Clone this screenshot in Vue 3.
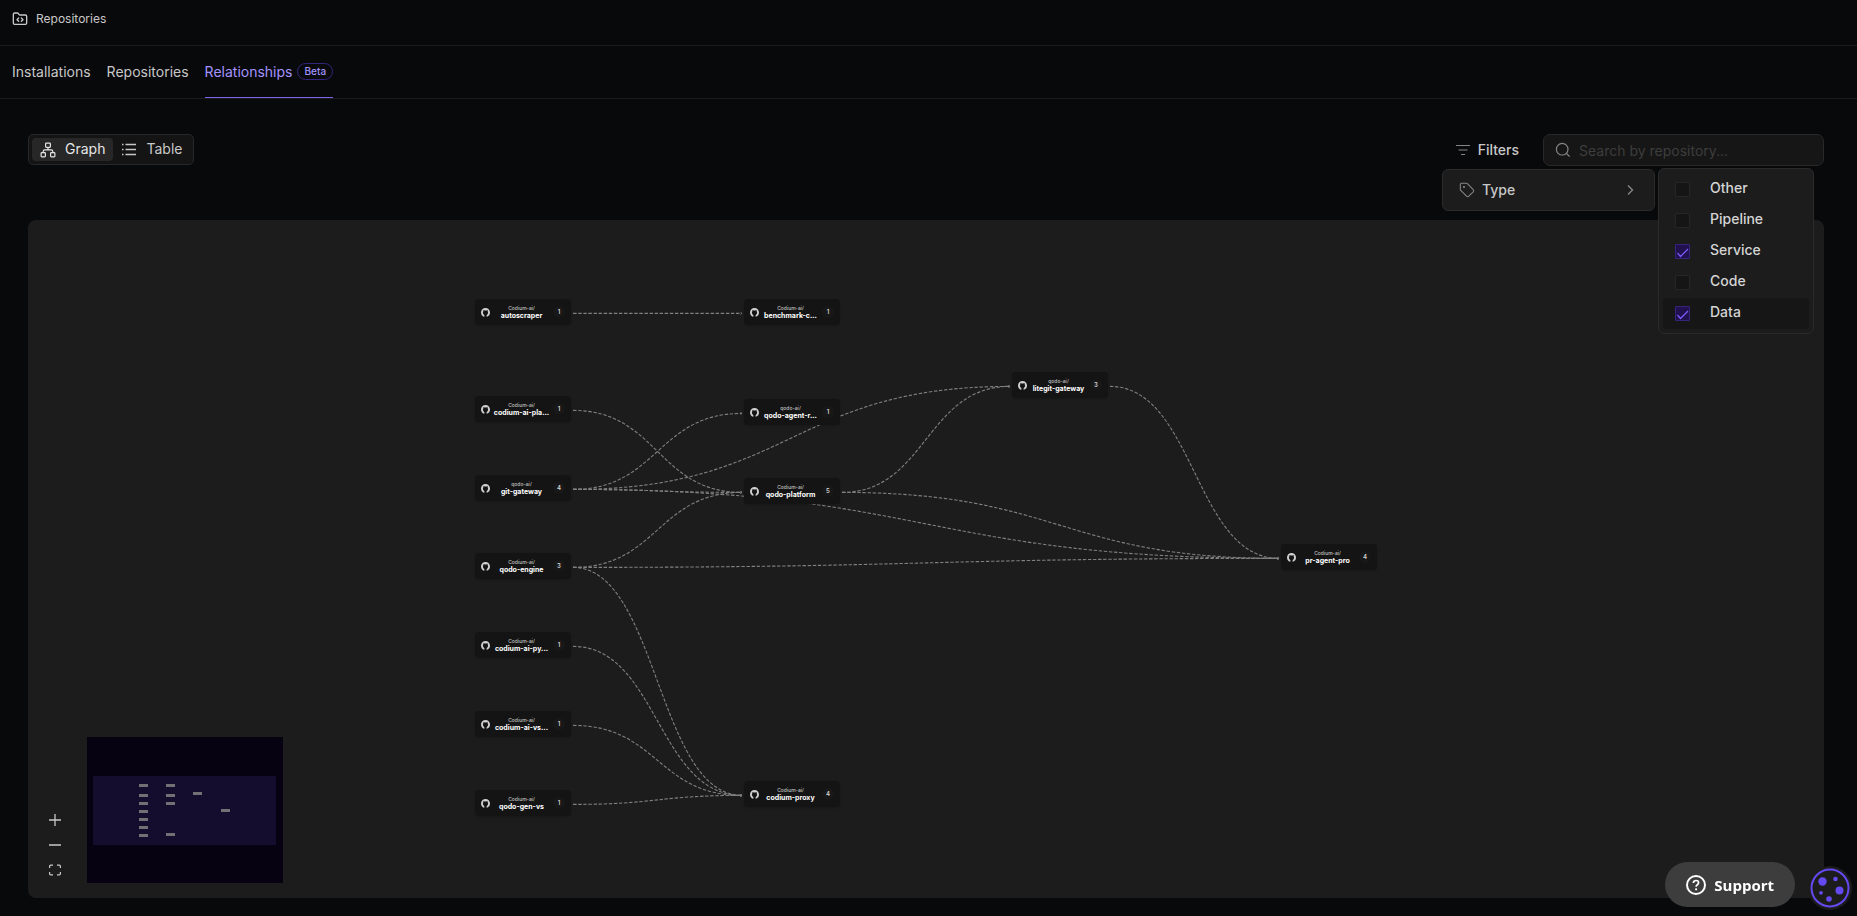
<template>
  <div class="page">
    <header class="topbar">
      <svg class="topbar-icon" viewBox="0 0 24 24" fill="none" stroke="currentColor" stroke-width="2" stroke-linecap="round" stroke-linejoin="round">
        <path d="M20 20a2 2 0 0 0 2-2V8a2 2 0 0 0-2-2h-7.9a2 2 0 0 1-1.69-.9L9.6 3.9A2 2 0 0 0 7.93 3H4a2 2 0 0 0-2 2v13a2 2 0 0 0 2 2Z" />
        <path d="m10 10.5-2.5 2.5 2.5 2.5M14 10.5l2.5 2.5-2.5 2.5" />
      </svg>
      <span>Repositories</span>
    </header>

    <nav class="tabs">
      <a
        v-for="tab in tabs"
        :key="tab.name"
        href="#"
        class="tab"
        :class="{ active: activeTab === tab.name }"
        @click.prevent="activeTab = tab.name"
      >
        {{ tab.name }}
        <span v-if="tab.badge" class="beta">{{ tab.badge }}</span>
      </a>
    </nav>

    <main class="content">
      <div class="toolbar">
        <div class="view-switch">
          <button type="button" :class="{ active: view === 'graph' }" @click="view = 'graph'">
            <svg viewBox="0 0 16 16" fill="none" stroke="currentColor" stroke-width="1.2">
              <rect x="5.6" y="1.1" width="4.8" height="4.3" rx="0.8" />
              <rect x="1.1" y="10.6" width="4.3" height="4.3" rx="0.8" />
              <rect x="10.6" y="10.6" width="4.3" height="4.3" rx="0.8" />
              <path d="M8 5.4v2.4M3.2 10.6V9.4c0-.9.6-1.6 1.6-1.6h6.4c1 0 1.6.7 1.6 1.6v1.2" />
            </svg>
            <span>Graph</span>
          </button>
          <button type="button" :class="{ active: view === 'table' }" @click="view = 'table'">
            <svg viewBox="0 0 16 16" fill="none" stroke="currentColor" stroke-width="1.3">
              <path d="M4.5 2.500H15M4.5 7.500H15M4.5 12.500H15M1 2.500h1.5M1 7.500h1.5M1 12.500h1.5" />
            </svg>
            <span>Table</span>
          </button>
        </div>

        <div class="actions">
          <div class="filter-wrap">
            <button type="button" class="filter-button" @click="filtersOpen = !filtersOpen">
              <svg viewBox="0 0 16 16" fill="none" stroke="currentColor" stroke-width="1.2">
                <path d="M1 3.5h14M3.5 8h9M6 12.5h4" />
              </svg>
              <span>Filters</span>
            </button>

            <div v-if="filtersOpen" class="menu">
              <button type="button" class="menu-item" @click="typeOpen = !typeOpen">
                <svg viewBox="0 0 24 24" fill="none" stroke="currentColor" stroke-width="1.6" stroke-linejoin="round">
                  <path d="M12.6 2.6A2 2 0 0 0 11.2 2H4a2 2 0 0 0-2 2v7.2a2 2 0 0 0 .6 1.4l8.7 8.7a2.4 2.4 0 0 0 3.4 0l6.6-6.6a2.4 2.4 0 0 0 0-3.4z" />
                  <circle cx="7.5" cy="7.5" r="0.8" fill="currentColor" />
                </svg>
                <span>Type</span>
                <svg class="chevron" viewBox="0 0 16 16" fill="none" stroke="currentColor" stroke-width="1.4">
                  <path d="m6 3.5 4.5 4.5L6 12.5" />
                </svg>
              </button>

              <div v-if="typeOpen" class="submenu">
                <label
                  v-for="option in typeOptions"
                  :key="option"
                  class="option"
                  :class="{ highlighted: option === hovered }"
                  @mouseenter="hovered = option"
                >
                  <input v-model="selectedTypes" type="checkbox" :value="option" />
                  <span>{{ option }}</span>
                </label>
              </div>
            </div>
          </div>

          <label class="search">
            <svg viewBox="0 0 16 16" fill="none" stroke="currentColor" stroke-width="1.2">
              <circle cx="7.2" cy="7.2" r="5.8" />
              <path d="m11.5 11.5 3.2 3.2" />
            </svg>
            <input v-model="query" type="text" placeholder="Search by repository..." aria-label="Search by repository" />
          </label>
        </div>
      </div>

      <section class="graph">
        <svg class="edges">
          <defs>
            <marker id="arrow" viewBox="0 0 4 4" refX="3" refY="2" markerWidth="3" markerHeight="3" orient="auto">
              <path d="M1 0.5 3 2 1 3.5" fill="none" stroke="#7a7a7a" stroke-width="0.8" />
            </marker>
          </defs>
          <path v-for="edge in edgePaths" :key="edge.key" :d="edge.d" class="edge" marker-end="url(#arrow)" />
        </svg>

        <div
          v-for="node in nodes"
          :key="node.id"
          class="node"
          :style="{ left: node.x + 'px', top: node.y + 'px' }"
        >
          <svg class="github" viewBox="0 0 16 16" fill="currentColor">
            <path d="M8 0C3.58 0 0 3.58 0 8c0 3.54 2.29 6.53 5.47 7.59.4.07.55-.17.55-.38v-2.4C5.2 12.1 3.4 10.7 3.4 8c0-1 .3-1.8.9-2.4-.1-.5-.2-1.3.1-2.1.8 0 1.6.4 2.2.9.9-.2 1.900-.2 2.800 0 .6-.5 1.400-.9 2.200-.9.3.8.2 1.600.1 2.100.6.6.9 1.400.9 2.400 0 2.700-1.800 4.100-2.620 4.810v2.400c0 .21.15.46.55.38A8.010 8.010 0 0 0 16 8c0-4.420-3.580-8-8-8z" />
          </svg>
          <div class="node-text">
            <span class="org">{{ node.org }}</span>
            <span class="name">{{ node.name }}</span>
          </div>
          <span class="count">{{ node.count }}</span>
        </div>

        <div class="overlay">
          <div class="controls">
            <button type="button" aria-label="Zoom in">
              <svg viewBox="0 0 12 12" stroke="currentColor" stroke-width="1.3"><path d="M0 6h12M6 0v12" /></svg>
            </button>
            <button type="button" aria-label="Zoom out">
              <svg viewBox="0 0 12 12" stroke="currentColor" stroke-width="1.3"><path d="M0 6h12" /></svg>
            </button>
            <button type="button" aria-label="Fit view">
              <svg viewBox="0 0 12 12" fill="none" stroke="currentColor" stroke-width="1.2">
                <path d="M.6 4V2.200Q.6 1.100 1.700 1.100H4M8 1.100h2.300q1.100 0 1.100 1.100V4M11.400 8v1.800q0 1.100-1.100 1.100H8M4 10.900H1.700Q.6 10.900.6 9.800V8" />
              </svg>
            </button>
          </div>
          <svg class="minimap" viewBox="0 0 196 146">
            <rect x="6" y="39" width="183" height="69" fill="#150d2e" />
            <rect
              v-for="node in nodes"
              :key="node.id"
              :x="minimapX(node)"
              :y="minimapY(node)"
              width="9"
              height="3"
              fill="#737075"
            />
          </svg>
        </div>
      </section>
    </main>

    <div class="floating">
      <button type="button" class="support">
        <svg viewBox="0 0 20 20" fill="none" stroke="currentColor" stroke-width="2">
          <circle cx="10" cy="10" r="9" />
          <path d="M7.400 8c0-1.500 1.100-2.500 2.600-2.500s2.600.9 2.600 2.300c0 1.900-2.500 2-2.500 4" stroke-width="1.700" />
          <circle cx="10.100" cy="14.300" r="1.100" fill="currentColor" stroke="none" />
        </svg>
        Support
      </button>
      <button type="button" class="cookie" aria-label="Cookie settings">
        <svg viewBox="0 0 44 44">
          <circle cx="22" cy="22" r="18.500" fill="none" stroke="#6549f0" stroke-width="2" />
          <g fill="#6549f0">
            <circle cx="14.500" cy="15.500" r="4.200" />
            <circle cx="27.500" cy="13" r="2.300" />
            <circle cx="31.500" cy="24.500" r="4" />
            <circle cx="13" cy="26.800" r="1.900" />
            <circle cx="21" cy="33" r="2.800" />
          </g>
        </svg>
      </button>
    </div>
  </div>
</template>

<script setup>
import { ref, computed } from 'vue'

const tabs = [
  { name: 'Installations' },
  { name: 'Repositories' },
  { name: 'Relationships', badge: 'Beta' }
]
const activeTab = ref('Relationships')
const view = ref('graph')
const query = ref('')

// --- Filters ---
const filtersOpen = ref(true)
const typeOpen = ref(true)
const typeOptions = ['Other', 'Pipeline', 'Service', 'Code', 'Data']
const selectedTypes = ref(['Service', 'Data'])
const hovered = ref('Data')

// --- Graph ---
const NODE_WIDTH = 96

const nodes = [
  { id: 'scraper', org: 'Codium-ai/', name: 'autoscraper', count: 1, x: 447, y: 79 },
  { id: 'pla', org: 'Codium-ai/', name: 'codium-ai-pla...', count: 1, x: 447, y: 176 },
  { id: 'git', org: 'qodo-ai/', name: 'git-gateway', count: 4, x: 447, y: 255 },
  { id: 'engine', org: 'Codium-ai/', name: 'qodo-engine', count: 3, x: 447, y: 333 },
  { id: 'py', org: 'Codium-ai/', name: 'codium-ai-py...', count: 1, x: 447, y: 412 },
  { id: 'vs', org: 'Codium-ai/', name: 'codium-ai-vs...', count: 1, x: 447, y: 491 },
  { id: 'gen', org: 'Codium-ai/', name: 'qodo-gen-vs', count: 1, x: 447, y: 570 },
  { id: 'bench', org: 'Codium-ai/', name: 'benchmark-c...', count: 1, x: 716, y: 79 },
  { id: 'agent', org: 'qodo-ai/', name: 'qodo-agent-r...', count: 1, x: 716, y: 179 },
  { id: 'platform', org: 'Codium-ai/', name: 'qodo-platform', count: 5, x: 716, y: 258 },
  { id: 'proxy', org: 'Codium-ai/', name: 'codium-proxy', count: 4, x: 716, y: 561 },
  { id: 'litegit', org: 'qodo-ai/', name: 'litegit-gateway', count: 3, x: 984, y: 152 },
  { id: 'pro', org: 'Codium-ai/', name: 'pr-agent-pro', count: 4, x: 1253, y: 324 }
]

const edges = [
  ['scraper', 'bench'],
  ['pla', 'platform'],
  ['git', 'agent'],
  ['git', 'litegit'],
  ['git', 'platform'],
  ['git', 'pro'],
  ['engine', 'platform'],
  ['engine', 'pro'],
  ['engine', 'proxy'],
  ['py', 'proxy'],
  ['vs', 'proxy'],
  ['gen', 'proxy'],
  ['platform', 'litegit'],
  ['platform', 'pro'],
  ['litegit', 'pro']
]

const edgePaths = computed(() =>
  edges.map(([from, to]) => {
    const source = nodes.find((n) => n.id === from)
    const target = nodes.find((n) => n.id === to)
    const sx = source.x + NODE_WIDTH + 2
    const sy = source.y + 14.4
    const tx = target.x - 2
    const ty = target.y + 14.4
    const mid = (sx + tx) / 2
    return { key: `${from}-${to}`, d: `M${sx} ${sy}C${mid} ${sy} ${mid} ${ty} ${tx} ${ty}` }
  })
)

// Node position inside the minimap
const minimapX = (node) => Math.round(6 + node.x * 0.102)
const minimapY = (node) => Math.round(39 + node.y * 0.102)
</script>

<style>
body {
  background: #08090b;
}
</style>

<style scoped>
.page {
  min-height: 100vh;
  box-sizing: border-box;
  display: flex;
  flex-direction: column;
  background: #08090b;
  color: #c8c8c8;
  font-family: Inter, "Liberation Sans", sans-serif;
  font-size: 14px;
}

button {
  font: inherit;
  color: inherit;
  background: none;
  border: none;
  padding: 0;
  cursor: pointer;
}

/* === Header === */
.topbar {
  display: flex;
  align-items: center;
  gap: 8px;
  height: 45px;
  padding: 0 12px 7px;
  box-sizing: border-box;
  font-size: 12px;
}
.topbar-icon {
  width: 16px;
  height: 16px;
}
.topbar span {
  padding-bottom: 1px;
}

.tabs {
  display: flex;
  gap: 16px;
  height: 54px;
  padding: 0 12px;
  box-sizing: border-box;
  border-top: 1px solid #1c1c1d;
  border-bottom: 1px solid #1c1c1d;
}
.tab {
  display: flex;
  align-items: center;
  gap: 5px;
  padding-bottom: 1px;
  border-bottom: 1px solid transparent;
  color: inherit;
  text-decoration: none;
}
.tab.active {
  color: #a394ff;
  border-bottom-color: #7b61ea;
}
.beta {
  padding: 0 6px;
  border: 1px solid #35247c;
  border-radius: 9px;
  font-size: 10px;
  font-weight: 500;
  line-height: 15px;
}

/* === Toolbar === */
.content {
  flex: 1;
  display: flex;
  flex-direction: column;
  padding: 35px 33px 18px 28px;
}
.toolbar {
  display: flex;
  justify-content: space-between;
  align-items: flex-start;
  height: 86px;
}
.view-switch {
  display: flex;
  padding: 3px;
  background: #141414;
  border: 1px solid #282828;
  border-radius: 5px;
}
.view-switch button {
  display: flex;
  align-items: center;
  gap: 9px;
  height: 23px;
  padding: 0 8px;
  border-radius: 4px;
}
.view-switch button.active {
  background: #272727;
  color: #e6e6e6;
}
.view-switch svg {
  width: 16px;
  height: 16px;
}
.view-switch span,
.filter-button span,
.menu-item span {
  padding-bottom: 2px;
}

.actions {
  display: flex;
  gap: 24px;
}
.filter-wrap {
  position: relative;
}
.filter-button {
  display: flex;
  align-items: center;
  gap: 7px;
  height: 32px;
  font-weight: 500;
}
.filter-button svg,
.menu-item svg {
  width: 16px;
  height: 16px;
  color: #858585;
}

.search {
  display: flex;
  align-items: center;
  gap: 8px;
  width: 281px;
  height: 32px;
  padding: 0 11px;
  box-sizing: border-box;
  background: #161616;
  border: 1px solid #292929;
  border-radius: 7px;
}
.search svg {
  flex: none;
  width: 16px;
  height: 16px;
  color: #858585;
}
.search input {
  flex: 1;
  min-width: 0;
  padding: 0;
  background: none;
  border: none;
  outline: none;
  color: #d0d0d0;
  font: inherit;
}
.search input::placeholder {
  color: #3d3d3d;
}

/* === Dropdown menus === */
.menu {
  position: absolute;
  top: 35px;
  right: -136px;
  z-index: 10;
  width: 213px;
  box-sizing: border-box;
  background: #1c1c1c;
  border: 1px solid #2a2a2a;
  border-radius: 6px;
}
.menu-item {
  display: flex;
  align-items: center;
  gap: 7px;
  width: 100%;
  height: 40px;
  padding: 0 16px;
  font-weight: 500;
}
.menu-item .chevron {
  margin-left: auto;
}
.submenu {
  position: absolute;
  top: -2px;
  left: 215px;
  width: 156px;
  padding: 5px 4px 4px;
  box-sizing: border-box;
  background: #1c1c1c;
  border: 1px solid #2a2a2a;
  border-radius: 6px;
}
.option {
  display: flex;
  align-items: center;
  gap: 20px;
  height: 31px;
  padding: 0 12px;
  border-radius: 3px;
  color: #d4d4d4;
  font-weight: 500;
}
.option.highlighted {
  background: #161616;
}
.option span {
  padding-bottom: 4px;
}
.option input {
  appearance: none;
  width: 15px;
  height: 15px;
  margin: 0;
  background: #151515;
  border: 1px solid #262626;
  border-radius: 1px;
}
.option input:checked {
  background: #21114e url("data:image/svg+xml,%3Csvg xmlns='http://www.w3.org/2000/svg' viewBox='0 0 13 13' fill='none' stroke='%237c5cff' stroke-width='1.2'%3E%3Cpath d='m1.500 8 3 3.500L12 4'/%3E%3C/svg%3E") center / 13px no-repeat;
  border-color: #36237c;
}

/* === Graph === */
.graph {
  position: relative;
  flex: 1;
  min-height: 678px;
  overflow: hidden;
  background: #1c1c1c;
  border-radius: 8px;
}
.edges {
  position: absolute;
  inset: 0;
  width: 100%;
  height: 100%;
}
.edge {
  fill: none;
  stroke: #808080;
  stroke-width: 1.1;
  stroke-dasharray: 3.4 1.7;
}
.node {
  position: absolute;
  display: flex;
  align-items: center;
  width: 96px;
  height: 26px;
  padding: 0 6px;
  box-sizing: border-box;
  background: #141414;
  border-radius: 4px;
  box-shadow: 0 1px 2px rgba(0, 0, 0, 0.15);
}
.github {
  flex: none;
  width: 9px;
  height: 9px;
  color: #d0d0d0;
}
.node-text {
  flex: 1;
  display: flex;
  flex-direction: column;
  align-items: center;
  white-space: nowrap;
}
.org {
  color: #c0c0c0;
  font-size: 5px;
  line-height: 7px;
  font-weight: 500;
}
.name {
  color: #fff;
  font-size: 7px;
  line-height: 8px;
  font-weight: 700;
}
.count {
  width: 12px;
  height: 12px;
  border-radius: 50%;
  background: #181818;
  color: #d4d4d4;
  font-size: 6px;
  font-weight: 600;
  line-height: 12px;
  text-align: center;
}

/* === Zoom controls and minimap === */
.overlay {
  position: absolute;
  left: 15px;
  bottom: 15px;
  display: flex;
  align-items: flex-end;
  gap: 20px;
}
.controls {
  display: flex;
  flex-direction: column;
  padding-bottom: 1px;
}
.controls button {
  display: flex;
  align-items: center;
  justify-content: center;
  width: 24px;
  height: 25px;
  color: #c8c8c8;
}
.controls svg {
  width: 12px;
  height: 12px;
}
.minimap {
  width: 196px;
  height: 146px;
  background: #070212;
}

/* === Floating buttons === */
.floating {
  position: fixed;
  right: 5px;
  bottom: 6px;
  display: flex;
  align-items: flex-start;
  gap: 13px;
}
.support {
  display: flex;
  align-items: center;
  gap: 8px;
  height: 45px;
  margin-bottom: 3px;
  padding: 0 21px;
  border-radius: 23px;
  background: #3d3d3d;
  color: #fff;
  font-family: "Open Sans", "Noto Sans", sans-serif;
  font-size: 15px;
  font-weight: 700;
}
.support svg {
  width: 20px;
  height: 20px;
}
.cookie {
  align-self: flex-end;
  width: 44px;
  height: 44px;
  border-radius: 50%;
  background: #1c1c1d;
}
.cookie svg {
  display: block;
  width: 44px;
  height: 44px;
}
</style>
